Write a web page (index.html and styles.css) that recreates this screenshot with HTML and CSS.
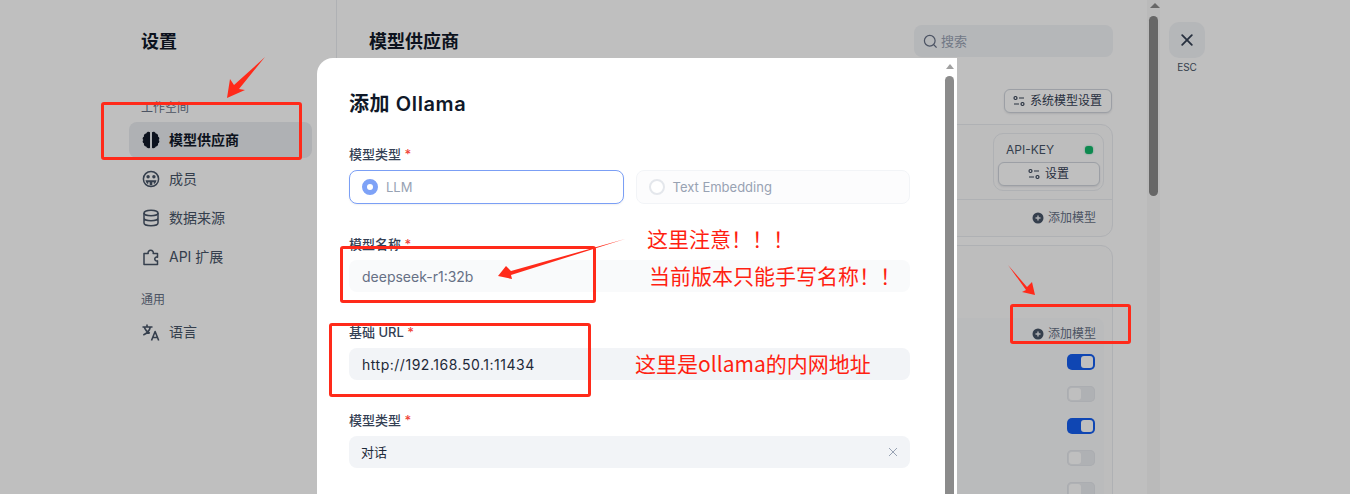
FILE: index.html
```html
<!DOCTYPE html>
<html lang="zh">
<head>
<meta charset="utf-8">
<title>设置</title>
<link rel="stylesheet" href="styles.css">
</head>
<body>
<div class="page">
  <aside class="sidebar">
    <div class="side-inner">
      <h1 class="side-title">设置</h1>
      <div class="group-label first">工作空间</div>
      <a class="nav active">
        <svg class="nav-icon" viewBox="0 0 20 20"><path fill="currentColor" d="M9 2.300V17.700C7.800 18.800 5.800 18.200 5.200 16.600 3.600 16.600 2.500 15.200 3 13.600 1.400 12.800 1.200 10.800 2.400 10 1.200 9.200 1.400 7.200 3 6.400 2.500 4.800 3.600 3.400 5.200 3.400 5.800 1.800 7.800 1.200 9 2.300Z"/><path fill="currentColor" d="M11 2.300V17.700C12.200 18.800 14.200 18.200 14.800 16.600 16.400 16.600 17.500 15.200 17 13.600 18.600 12.800 18.800 10.800 17.600 10 18.800 9.200 18.600 7.200 17 6.400 17.500 4.800 16.400 3.400 14.800 3.400 14.200 1.800 12.200 1.200 11 2.300Z"/></svg>
        <span>模型供应商</span>
      </a>
      <a class="nav">
        <svg class="nav-icon" viewBox="0 0 20 20"><circle cx="10" cy="10" r="7.600" fill="none" stroke="currentColor" stroke-width="1.500"/><circle cx="7.100" cy="7.800" r="1.700" fill="currentColor"/><circle cx="12.900" cy="7.800" r="1.700" fill="currentColor"/><path fill="currentColor" d="M4.500 11.200h11c-.3 2-1.300 3.300-2.700 4v-2h-1.500v3H8.700v-3H7.200v2c-1.400-.7-2.400-2-2.700-4z"/></svg>
        <span>成员</span>
      </a>
      <a class="nav">
        <svg class="nav-icon" viewBox="0 0 20 20" fill="none" stroke="currentColor" stroke-width="1.500"><ellipse cx="10" cy="5" rx="7" ry="2.800"/><path d="M3 5v10c0 1.500 3.100 2.800 7 2.800s7-1.300 7-2.800V5M3 10c0 1.500 3.100 2.800 7 2.800s7-1.300 7-2.800"/></svg>
        <span>数据来源</span>
      </a>
      <a class="nav">
        <svg class="nav-icon" viewBox="0 0 20 20" fill="none" stroke="currentColor" stroke-width="1.500" stroke-linejoin="round"><path d="M3 17.500V6.500h4.200a2.600 2.600 0 1 1 5 0H16.500v3.700a2 2 0 1 0 0 3.700v3.600z"/></svg>
        <span>API 扩展</span>
      </a>
      <div class="group-label second">通用</div>
      <a class="nav">
        <svg class="nav-icon" viewBox="0 0 20 20" fill="none" stroke="currentColor" stroke-width="1.600" stroke-linejoin="round"><path d="M1.500 5h10M6 2.500V5M9.300 5c-.7 3.700-3.300 6.500-7 8M3.300 5c.8 2.800 3 5 5.500 6.200M10.500 18.500l3.600-9 3.600 9M11.800 15.500h4.700"/></svg>
        <span>语言</span>
      </a>
    </div>
  </aside>

  <main class="content">
    <header class="content-head">
      <h2 class="content-title">模型供应商</h2>
      <div class="search">
        <svg class="search-icon" viewBox="0 0 16 16" fill="none" stroke="currentColor" stroke-width="1.300"><circle cx="7.200" cy="7.200" r="5.700"/><path d="M11.500 11.500l3 3"/></svg>
        <span>搜索</span>
      </div>
    </header>
    <div class="toolbar">
      <button class="btn">
        <svg class="tune" viewBox="0 0 12 12" fill="none" stroke="currentColor" stroke-width="1.200"><circle cx="2.500" cy="3" r="1.500"/><path d="M6 3h5M1 9h5"/><circle cx="9.500" cy="9" r="1.500"/></svg>
        <span>系统模型设置</span>
      </button>
    </div>
    <section class="card card-top">
      <div class="card-head">
        <div class="key-box">
          <div class="key-row"><span>API-KEY</span><i class="dot"></i></div>
          <button class="btn btn-wide">
            <svg class="tune" viewBox="0 0 12 12" fill="none" stroke="currentColor" stroke-width="1.200"><circle cx="2.500" cy="3" r="1.500"/><path d="M6 3h5M1 9h5"/><circle cx="9.500" cy="9" r="1.500"/></svg>
            <span>设置</span>
          </button>
        </div>
      </div>
      <div class="card-foot">
        <svg class="plus" viewBox="0 0 12 12"><circle cx="6" cy="6" r="5.500" fill="currentColor"/><path d="M3.500 6h5M6 3.500v5" stroke="#eaecf0" stroke-width="1.400"/></svg>
        <span>添加模型</span>
      </div>
    </section>
    <section class="card card-low">
      <div class="model-list">
        <div class="list-head">
          <svg class="plus" viewBox="0 0 12 12"><circle cx="6" cy="6" r="5.500" fill="currentColor"/><path d="M3.500 6h5M6 3.500v5" stroke="#eaecf0" stroke-width="1.400"/></svg>
          <span>添加模型</span>
        </div>
        <div class="toggle on"><i></i></div>
        <div class="toggle"><i></i></div>
        <div class="toggle on"><i></i></div>
        <div class="toggle"><i></i></div>
        <div class="toggle"><i></i></div>
      </div>
    </section>
  </main>

  <div class="page-scroll">
    <i class="arrow-up"></i>
    <i class="thumb page-thumb"></i>
  </div>

  <div class="close-col">
    <button class="close-btn">
      <svg viewBox="0 0 12 12" fill="none" stroke="currentColor" stroke-width="1.800" stroke-linecap="round"><path d="M1.200 1.200l9.600 9.600M10.800 1.200l-9.600 9.600"/></svg>
    </button>
    <span class="esc">ESC</span>
  </div>
</div>

<div class="overlay"></div>

<div class="modal">
  <div class="modal-scroll">
    <i class="arrow-up"></i>
    <i class="thumb modal-thumb"></i>
  </div>
  <h3 class="modal-title">添加 Ollama</h3>
  <div class="field first-field">
    <label class="label">模型类型 <b>*</b></label>
    <div class="radios">
      <div class="radio selected"><i class="mark"></i><span>LLM</span></div>
      <div class="radio"><i class="mark"></i><span>Text Embedding</span></div>
    </div>
  </div>
  <div class="field">
    <label class="label">模型名称 <b>*</b></label>
    <div class="input light muted">deepseek-r1:32b</div>
  </div>
  <div class="field">
    <label class="label">基础 URL <b>*</b></label>
    <div class="input url">http://192.168.50.1:11434</div>
  </div>
  <div class="field">
    <label class="label">模型类型 <b>*</b></label>
    <div class="input select"><span>对话</span>
      <svg class="clear" viewBox="0 0 10 10" fill="none" stroke="currentColor" stroke-width="1"><path d="M1 1l8 8M9 1l-8 8"/></svg>
    </div>
  </div>
</div>

<svg class="arrows" viewBox="0 0 1350 494">
  <polygon points="265,57 239,89 245,90 227,98 230,79 234,85"/>
  <polygon points="625,239 511,271 506,266 498,276 512,279 511,275"/>
  <polygon points="1008,265 1027,287 1032,282 1035,295 1022,292 1026,290"/>
</svg>

<div class="mark-box box-a"></div>
<div class="mark-box box-b"></div>
<div class="mark-box box-c"></div>
<div class="mark-box box-d"></div>

<div class="note note-a">这里注意！！！</div>
<div class="note note-b">当前版本只能手写名称！！</div>
<div class="note note-c">这里是ollama的内网地址</div>
</body>
</html>
```
FILE: styles.css
```css
* { box-sizing: border-box; }
html, body { height: 100%; }
body {
  margin: 0;
  height: 494px;
  overflow: hidden;
  background: #fff;
  color: #101828;
  font-family: Inter, "Noto Sans CJK SC", sans-serif;
  font-size: 14px;
}
h1, h2, h3 { margin: 0; }
button { font: inherit; color: inherit; background: none; border: 0; padding: 0; }

.page { display: flex; height: 494px; overflow: hidden; }

.sidebar { width: 337px; flex: none; border-right: 1px solid #eaecf0; padding: 29px 0 0 129px; }
.side-inner { width: 183px; }
.side-title { font-size: 18px; line-height: 26px; font-weight: 600; padding-left: 12px; }
.group-label { font-size: 12px; line-height: 18px; color: #667085; padding-left: 12px; }
.group-label.first { margin-top: 44px; margin-bottom: 5px; }
.group-label.second { margin-top: 16px; margin-bottom: 5px; }
.nav {
  display: flex; align-items: center; gap: 8px;
  height: 36px; margin-bottom: 3px; padding: 0 12px;
  border-radius: 8px; color: #475467;
}
.nav span { padding-bottom: 2px; }
.nav.active { background: #eaecf0; color: #101828; font-weight: 600; }
.nav-icon { width: 20px; height: 20px; flex: none; }

.content { width: 810px; flex: none; padding: 0 34px 0 32px; }
.content-head { display: flex; align-items: center; justify-content: space-between; padding-top: 25px; height: 57px; }
.content-title { font-size: 18px; line-height: 26px; font-weight: 600; margin-top: 2px; }
.search {
  display: flex; align-items: center; gap: 3px;
  width: 199px; height: 32px; padding: 0 9px;
  background: #f2f4f7; border-radius: 8px; color: #98a2b3; font-size: 13px;
}
.search span { padding-bottom: 2px; }
.search-icon { width: 15px; height: 15px; color: #667085; }
.toolbar { display: flex; justify-content: flex-end; padding: 32px 1px 0 0; height: 67px; }
.btn {
  display: flex; align-items: center; justify-content: center; gap: 5px;
  height: 24px; padding: 0 9px 0 8px;
  background: #fff; border: 1px solid #d0d5dd; border-radius: 6px;
  box-shadow: 0 1px 2px rgba(16,24,40,.1);
  color: #344054; font-size: 12px; line-height: 18px;
}
.btn-wide { width: 102px; }
.tune { width: 12px; height: 12px; }
.card { width: 744px; border: 1px solid #eaecf0; border-radius: 12px; background: #fcfcfd; }
.card-top { height: 113px; }
.card-head { display: flex; justify-content: flex-end; height: 75px; padding: 8px 8px 0 0; border-bottom: 1px solid #eaecf0; }
.key-box { width: 111px; height: 58px; padding: 5px 4px 0; border: 1px solid #eaecf0; border-radius: 10px; }
.key-row { display: flex; align-items: center; justify-content: space-between; height: 20px; padding: 0 6px 0 8px; margin-bottom: 3px; font-size: 12px; color: #475467; }
.dot { width: 8px; height: 8px; margin-top: 2px; background: #12b76a; border-radius: 3px; box-shadow: 0 0 2px rgba(18,183,106,.6); }
.card-foot, .list-head {
  display: flex; align-items: center; justify-content: flex-end; gap: 4px;
  color: #667085; font-size: 12px; line-height: 18px;
}
.card-foot { height: 36px; padding-right: 16px; }
.plus { width: 12px; height: 12px; color: #475467; }
.card-low { height: 300px; margin-top: 8px; padding: 72px 8px 0 0; }
.model-list { height: 220px; background: #f9fafb; border-radius: 8px; display: flex; flex-direction: column; align-items: flex-end; }
.list-head { height: 30px; padding: 2px 8px 0 0; width: 100%; }
.toggle { position: relative; width: 28px; height: 16px; margin: 6px 9px 10px 0; background: #eaecf0; border-radius: 5px; box-shadow: inset 0 0 0 1px #e4e7ec; }
.toggle.on { background: #155eef; box-shadow: none; }
.toggle i { position: absolute; left: 2px; top: 2px; width: 12px; height: 12px; background: #fff; border-radius: 3px; }
.toggle.on i { left: 14px; }

.page-scroll { position: relative; width: 13px; flex: none; background: #f8f8f8; padding-left: 2px; }
.arrow-up { display: block; width: 0; height: 0; margin: 3px auto 8px; border: 5px solid transparent; border-top: 0; border-bottom: 5px solid #8a8a8a; }
.thumb { display: block; border-radius: 5px; }
.page-thumb { width: 9px; height: 180px; background: #888; }
.close-col { display: flex; flex-direction: column; align-items: center; width: 36px; margin-left: 9px; padding-top: 22px; color: #667085; }
.close-btn { display: flex; align-items: center; justify-content: center; width: 36px; height: 36px; background: #f2f4f7; border-radius: 10px; color: #344054; }
.close-btn svg { width: 12px; height: 12px; }
.esc { font-size: 10px; line-height: 14px; margin-top: 2px; color: #475467; }

.overlay { position: fixed; inset: 0; background: rgba(0,0,0,.25); }

.modal {
  position: fixed; left: 317px; top: 58px; bottom: 0; width: 640px;
  padding: 32px 47px 0 32px; background: #fff;
  border-top-left-radius: 16px; overflow: hidden;
}
.modal-scroll { position: absolute; right: 3px; top: 0; width: 9px; }
.modal-scroll .arrow-up { margin: 6px auto 7px; border-bottom-color: #a0a0a0; border-width: 0 4px 5px; }
.modal-thumb { width: 9px; height: 500px; background: #8b8b8b; }
.modal-title { font-size: 20px; line-height: 28px; font-weight: 600; letter-spacing: .6px; }
.field { margin-top: 30px; }
.first-field { margin-top: 26px; }
.label { display: block; font-size: 13px; line-height: 20px; font-weight: 500; color: #344054; margin-bottom: 6px; }
.label b { color: #f04438; font-weight: 500; }
.radios { display: flex; gap: 12px; }
.radio {
  flex: 1; display: flex; align-items: center; gap: 8px;
  height: 34px; padding: 0 12px;
  border: 1px solid #f2f4f7; border-radius: 8px; background: #fcfcfd;
  font-size: 13px; color: #98a2b3;
}
.radio.selected { background: #fff; border-color: #7b9ff5; box-shadow: 0 1px 2px rgba(16,24,40,.06); }
.mark { width: 16px; height: 16px; border: 2px solid #e4e7ec; border-radius: 50%; background: #fff; flex: none; }
.radio.selected .mark { border: 5px solid #7ea2f7; }
.input {
  display: flex; align-items: center; justify-content: space-between;
  height: 32px; padding: 0 13px; background: #f2f4f7; border-radius: 8px;
  font-size: 14px; color: #1d2939;
}
.input.url { letter-spacing: .52px; }
.input.light { background: #f9fafb; }
.input.muted { color: #667085; }
.select { padding: 0 12px; font-size: 13px; }
.select span { padding-bottom: 2px; }
.clear { width: 10px; height: 10px; color: #98a2b3; }

.arrows { position: fixed; left: 0; top: 0; width: 1350px; height: 494px; pointer-events: none; }
.arrows polygon { fill: #ff2a1a; }
.mark-box { position: fixed; border: 3px solid #ff2a1a; border-radius: 3px; }
.box-a { left: 101px; top: 102px; width: 201px; height: 58px; }
.box-b { left: 340px; top: 246px; width: 256px; height: 57px; }
.box-c { left: 329px; top: 323px; width: 262px; height: 74px; }
.box-d { left: 1010px; top: 304px; width: 121px; height: 40px; }
.note { position: fixed; color: #ff1f12; font-size: 21px; line-height: 28px; white-space: nowrap; font-family: "Noto Sans CJK SC", sans-serif; }
.note-a { left: 647px; top: 224px; }
.note-b { left: 649px; top: 261px; }
.note-c { left: 635px; top: 349px; }
```
